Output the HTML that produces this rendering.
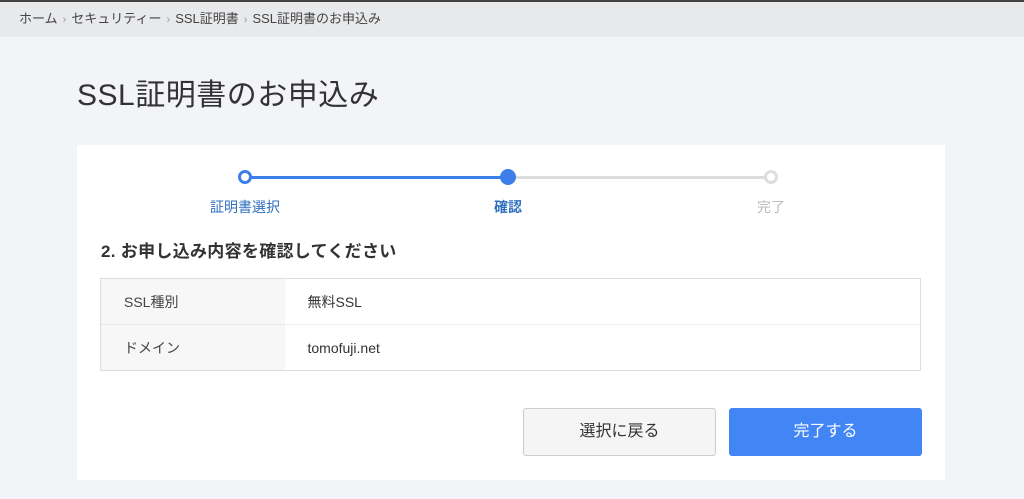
<!DOCTYPE html><html><head><meta charset="utf-8"><style>
body{margin:0;width:1024px;height:499px;background:#f3f4f7;font-family:"Liberation Sans","Noto Sans CJK JP",sans-serif;position:relative;overflow:hidden;color:#333}
.bc{position:absolute;left:0;top:0;width:1024px;height:37px;background:#e8e9eb;border-top:2px solid #444;box-sizing:border-box;font-size:13px;color:#444;line-height:34px;padding-left:19px}
.bc span{color:#999;margin:0 5px;font-size:11px}
h1{position:absolute;left:77px;top:70px;margin:0;font-weight:normal;font-size:30px;letter-spacing:0.5px;color:#333}
.card{position:absolute;left:77px;top:145px;width:868px;height:335px;background:#fff}
.a{position:absolute}
.c{position:absolute;width:10px;height:10px;border-radius:50%;box-sizing:border-box}
.lbl{position:absolute;font-size:14px;top:52px;width:120px;text-align:center}
table{position:absolute;left:23px;top:133px;width:821px;border-collapse:collapse;border:1px solid #ddd;font-size:14px}
td{height:45px;padding:0}
td.k{width:184px;background:#f7f7f7;padding-left:23px;box-sizing:border-box;color:#444}
td.v{padding-left:23px}
tr+tr td{border-top:1px dotted #ddd}
.btn{position:absolute;top:263px;width:193px;height:48px;box-sizing:border-box;border-radius:3px;font-size:16px;text-align:center;line-height:46px;border:1px solid transparent}
</style></head><body>
<div class="bc">ホーム<span>›</span>セキュリティー<span>›</span>SSL証明書<span>›</span>SSL証明書のお申込み</div>
<h1>SSL証明書のお申込み</h1>
<div class="card">
<div class="a" style="left:173px;top:31px;width:258px;height:3px;background:#3d7fe8"></div>
<div class="a" style="left:436px;top:31px;width:258px;height:3px;background:#ddd"></div>
<div class="c" style="left:161px;top:25px;width:14px;height:14px;border:3px solid #3d7fe8;background:#fff"></div>
<div class="c" style="left:423px;top:24px;width:16px;height:16px;background:#3d7fe8"></div>
<div class="c" style="left:687px;top:25px;width:14px;height:14px;border:3px solid #ddd;background:#fff"></div>
<div class="lbl" style="left:108px;color:#2f6fbf">証明書選択</div>
<div class="lbl" style="left:371px;color:#2f6fbf;font-weight:bold">確認</div>
<div class="lbl" style="left:634px;color:#bbb">完了</div>
<div class="a" style="left:24px;top:92px;font-size:17px;letter-spacing:0.3px;font-weight:bold;color:#333">2. お申し込み内容を確認してください</div>
<table><tr><td class="k">SSL種別</td><td class="v">無料SSL</td></tr><tr><td class="k">ドメイン</td><td class="v">tomofuji.net</td></tr></table>
<div class="btn" style="left:446px;background:#f5f5f5;border-color:#ccc;color:#333">選択に戻る</div>
<div class="btn" style="left:652px;background:#4285f4;color:#fff">完了する</div>
</div>
</body></html>
